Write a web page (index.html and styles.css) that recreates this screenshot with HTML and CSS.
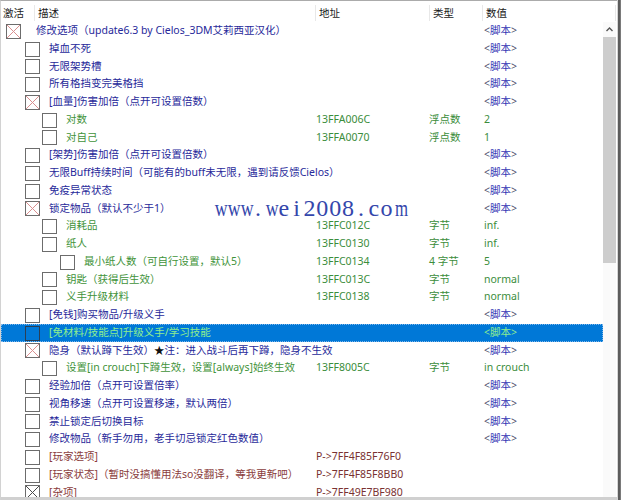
FILE: index.html
```html
<!DOCTYPE html>
<html lang="zh">
<head>
<meta charset="utf-8">
<title>Cheat Table</title>
<link rel="stylesheet" href="styles.css">
</head>
<body>
<div class="window">
  <div class="pane">
    <div class="header">
      <div class="hc hc-first">激活</div>
      <div class="hc">描述</div>
      <div class="hc">地址</div>
      <div class="hc">类型</div>
      <div class="hc hc-last">数值</div>
      <div class="hc-rest"></div>
    </div>
    <div class="middle">
      <div class="rows">
        <div class="row blue l0"><div class="desc"><span class="cb x"><svg viewBox="0 0 13 13"><path d="M0 0L13 13M13 0L0 13"/></svg></span><span class="txt">修改选项（update6.3 by Cielos_3DM艾莉西亚汉化）</span></div><div class="addr"></div><div class="type"></div><div class="val"><span class="br">&lt;</span><span class="sv">脚本</span><span class="br">&gt;</span></div></div>
        <div class="row blue l1"><div class="desc"><span class="cb"></span><span class="txt">掉血不死</span></div><div class="addr"></div><div class="type"></div><div class="val"><span class="br">&lt;</span><span class="sv">脚本</span><span class="br">&gt;</span></div></div>
        <div class="row blue l1"><div class="desc"><span class="cb"></span><span class="txt">无限架势槽</span></div><div class="addr"></div><div class="type"></div><div class="val"><span class="br">&lt;</span><span class="sv">脚本</span><span class="br">&gt;</span></div></div>
        <div class="row blue l1"><div class="desc"><span class="cb"></span><span class="txt">所有格挡变完美格挡</span></div><div class="addr"></div><div class="type"></div><div class="val"><span class="br">&lt;</span><span class="sv">脚本</span><span class="br">&gt;</span></div></div>
        <div class="row blue l1"><div class="desc"><span class="cb x"><svg viewBox="0 0 13 13"><path d="M0 0L13 13M13 0L0 13"/></svg></span><span class="txt">[血量]伤害加倍（点开可设置倍数）</span></div><div class="addr"></div><div class="type"></div><div class="val"><span class="br">&lt;</span><span class="sv">脚本</span><span class="br">&gt;</span></div></div>
        <div class="row green l2"><div class="desc"><span class="cb"></span><span class="txt">对数</span></div><div class="addr">13FFA006C</div><div class="type">浮点数</div><div class="val">2</div></div>
        <div class="row green l2"><div class="desc"><span class="cb"></span><span class="txt">对自己</span></div><div class="addr">13FFA0070</div><div class="type">浮点数</div><div class="val">1</div></div>
        <div class="row blue l1"><div class="desc"><span class="cb"></span><span class="txt">[架势]伤害加倍（点开可设置倍数）</span></div><div class="addr"></div><div class="type"></div><div class="val"><span class="br">&lt;</span><span class="sv">脚本</span><span class="br">&gt;</span></div></div>
        <div class="row blue l1"><div class="desc"><span class="cb"></span><span class="txt">无限Buff持续时间（可能有的buff未无限，遇到请反馈Cielos）</span></div><div class="addr"></div><div class="type"></div><div class="val"><span class="br">&lt;</span><span class="sv">脚本</span><span class="br">&gt;</span></div></div>
        <div class="row blue l1"><div class="desc"><span class="cb"></span><span class="txt">免疫异常状态</span></div><div class="addr"></div><div class="type"></div><div class="val"><span class="br">&lt;</span><span class="sv">脚本</span><span class="br">&gt;</span></div></div>
        <div class="row blue l1"><div class="desc"><span class="cb x"><svg viewBox="0 0 13 13"><path d="M0 0L13 13M13 0L0 13"/></svg></span><span class="txt">锁定物品（默认不少于1）</span></div><div class="addr"></div><div class="type"></div><div class="val"><span class="br">&lt;</span><span class="sv">脚本</span><span class="br">&gt;</span></div></div>
        <div class="row green l2"><div class="desc"><span class="cb"></span><span class="txt">消耗品</span></div><div class="addr">13FFC012C</div><div class="type">字节</div><div class="val">inf.</div></div>
        <div class="row green l2"><div class="desc"><span class="cb"></span><span class="txt">纸人</span></div><div class="addr">13FFC0130</div><div class="type">字节</div><div class="val">inf.</div></div>
        <div class="row green l3"><div class="desc"><span class="cb"></span><span class="txt">最小纸人数（可自行设置，默认5）</span></div><div class="addr">13FFC0134</div><div class="type">4 字节</div><div class="val">5</div></div>
        <div class="row green l2"><div class="desc"><span class="cb"></span><span class="txt">钥匙（获得后生效）</span></div><div class="addr">13FFC013C</div><div class="type">字节</div><div class="val">normal</div></div>
        <div class="row green l2"><div class="desc"><span class="cb"></span><span class="txt">义手升级材料</span></div><div class="addr">13FFC0138</div><div class="type">字节</div><div class="val">normal</div></div>
        <div class="row blue l1"><div class="desc"><span class="cb"></span><span class="txt">[免钱]购买物品/升级义手</span></div><div class="addr"></div><div class="type"></div><div class="val"><span class="br">&lt;</span><span class="sv">脚本</span><span class="br">&gt;</span></div></div>
        <div class="row sel l1"><div class="desc"><span class="cb"></span><span class="txt">[免材料/技能点]升级义手/学习技能</span></div><div class="addr"></div><div class="type"></div><div class="val">&lt;脚本&gt;</div></div>
        <div class="row blue l1"><div class="desc"><span class="cb x"><svg viewBox="0 0 13 13"><path d="M0 0L13 13M13 0L0 13"/></svg></span><span class="txt">隐身（默认蹲下生效）<span class="star">★</span>注：进入战斗后再下蹲，隐身不生效</span></div><div class="addr"></div><div class="type"></div><div class="val"><span class="br">&lt;</span><span class="sv">脚本</span><span class="br">&gt;</span></div></div>
        <div class="row green l2"><div class="desc"><span class="cb"></span><span class="txt">设置[in crouch]下蹲生效，设置[always]始终生效</span></div><div class="addr">13FF8005C</div><div class="type">字节</div><div class="val">in crouch</div></div>
        <div class="row blue l1"><div class="desc"><span class="cb"></span><span class="txt">经验加倍（点开可设置倍率）</span></div><div class="addr"></div><div class="type"></div><div class="val"><span class="br">&lt;</span><span class="sv">脚本</span><span class="br">&gt;</span></div></div>
        <div class="row blue l1"><div class="desc"><span class="cb"></span><span class="txt">视角移速（点开可设置移速，默认两倍）</span></div><div class="addr"></div><div class="type"></div><div class="val"><span class="br">&lt;</span><span class="sv">脚本</span><span class="br">&gt;</span></div></div>
        <div class="row blue l1"><div class="desc"><span class="cb"></span><span class="txt">禁止锁定后切换目标</span></div><div class="addr"></div><div class="type"></div><div class="val"><span class="br">&lt;</span><span class="sv">脚本</span><span class="br">&gt;</span></div></div>
        <div class="row blue l1"><div class="desc"><span class="cb"></span><span class="txt">修改物品（新手勿用，老手切忌锁定红色数值）</span></div><div class="addr"></div><div class="type"></div><div class="val"><span class="br">&lt;</span><span class="sv">脚本</span><span class="br">&gt;</span></div></div>
        <div class="row maroon l1"><div class="desc"><span class="cb"></span><span class="txt">[玩家选项]</span></div><div class="addr">P-&gt;7FF4F85F76F0</div><div class="type"></div><div class="val"></div></div>
        <div class="row maroon l1"><div class="desc"><span class="cb"></span><span class="txt">[玩家状态]（暂时没搞懂用法so没翻译，等我更新吧）</span></div><div class="addr">P-&gt;7FF4F85F8BB0</div><div class="type"></div><div class="val"></div></div>
        <div class="row maroon l1"><div class="desc"><span class="cb x dark"><svg viewBox="0 0 13 13"><path d="M0 0L13 13M13 0L0 13"/></svg></span><span class="txt">[杂项]</span></div><div class="addr">P-&gt;7FF49E7BF980</div><div class="type"></div><div class="val"></div></div>
      </div>
      <div class="vscroll">
        <div class="sb-up"><svg viewBox="0 0 13 15"><path d="M3.5 9L6.5 6L9.5 9"/></svg></div>
        <div class="sb-thumb"></div>
        <div class="sb-track"></div>
      </div>
    </div>
    <div class="hscroll"></div>
  </div>
  <div class="edge"></div>
  <div class="watermark"><span class="wc wn">w</span><span class="wc wn">w</span><span class="wc wn">w</span><span class="wc">.</span><span class="wc wn">w</span><span class="wc">e</span><span class="wc">i</span><span class="wc">2</span><span class="wc">0</span><span class="wc">0</span><span class="wc">8</span><span class="wc">.</span><span class="wc">c</span><span class="wc">o</span><span class="wc wm">m</span></div>
</div>
</body>
</html>
```

FILE: styles.css
```css
html, body {
  margin: 0;
  padding: 0;
  background: #ffffff;
}

body {
  width: 621px;
  height: 500px;
  overflow: hidden;
  font-family: "Noto Sans", "Noto Sans CJK SC", sans-serif;
  font-size: 10.5px;
}

.window {
  position: relative;
  width: 621px;
  height: 500px;
  display: flex;
  background: #ffffff;
  overflow: hidden;
}

.pane {
  width: 617px;
  height: 500px;
  box-sizing: border-box;
  border-top: 1px solid #ababab;
  border-left: 1px solid #d2d2d2;
  display: flex;
  flex-direction: column;
}

.edge {
  width: 4px;
  height: 500px;
  background: linear-gradient(to right, #d6d6d6 0 1px, #5c5c5c 1px 3px, #7a7a7a 3px 4px);
}

/* header */
.header {
  height: 21px;
  box-sizing: border-box;
  padding-top: 4px;
  display: grid;
  grid-template-columns: 33px 281px 114px 53px 134px 1fr;
  color: #1a1a1a;
  flex: none;
}

.hc {
  height: 16px;
  line-height: 16px;
  border-left: 1px solid #e8e8e8;
  padding-left: 3px;
  white-space: nowrap;
}

.hc-first {
  border-left: none;
  padding-left: 2px;
}

.hc-last {
  border-right: 1px solid #e8e8e8;
}

.hc-rest {
  height: 16px;
}

/* body */
.middle {
  flex: 1;
  min-height: 0;
  display: flex;
}

.rows {
  flex: 1;
  min-width: 0;
  overflow: hidden;
}

.row {
  height: 17.76px;
  line-height: 17.76px;
  display: grid;
  grid-template-columns: 314px 114px 53px 1fr;
  white-space: nowrap;
}

.desc {
  display: flex;
  align-items: center;
  min-width: 0;
  overflow: visible;
  position: relative;
  z-index: 1;
}

.cb {
  flex: none;
  width: 15px;
  height: 15px;
  box-sizing: border-box;
  border: 1px solid #6c6c6c;
  background: #ffffff;
  margin-top: 1px;
  margin-right: 9px;
  display: flex;
}

.cb svg {
  width: 13px;
  height: 13px;
}

.cb svg path {
  stroke: #d98f8f;
  stroke-width: 1;
  fill: none;
}

.cb.dark svg path {
  stroke: #4a4a4a;
}

.l0 .cb { margin-left: 5px; margin-right: 15px; }
.l1 .cb { margin-left: 24px; }
.l2 .cb { margin-left: 41px; }
.l3 .cb { margin-left: 59px; }

.addr { padding-left: 1px; }
.type { padding-left: 0; }
.val { padding-left: 2px; }

.blue .txt { color: #27299a; }
.sv { color: #3537b4; }
.br { color: #4a4a68; }

.green { color: #3b8d3b; }
.green .txt { color: #3f933a; }

.maroon { color: #7a3232; }
.maroon .txt { color: #8a3c3c; }

.star { color: #111111; }

.sel {
  background: #0078d7;
  color: #8fee8f;
  outline: 1px dotted #7fb6ea;
  outline-offset: -1px;
}

.sel .cb {
  background: transparent;
  border-color: #2b3f55;
}

/* scrollbars */
.vscroll {
  width: 13px;
  margin-right: 1px;
  display: flex;
  flex-direction: column;
  background: #fafafa;
}

.sb-up {
  height: 15px;
  flex: none;
  display: flex;
}

.sb-up svg {
  width: 13px;
  height: 15px;
}

.sb-up path {
  stroke: #555555;
  stroke-width: 1.4;
  fill: none;
}

.sb-thumb {
  height: 226px;
  flex: none;
  background: #cdcdcd;
}

.sb-track {
  flex: 1;
}

.hscroll {
  height: 3px;
  flex: none;
  background: #d0d0d0;
}

/* watermark overlay */
.watermark {
  position: absolute;
  left: 213px;
  top: 198px;
  display: flex;
  font-family: "Liberation Serif", serif;
  font-size: 24px;
  line-height: 20px;
  height: 20px;
  color: #3446ab;
  white-space: nowrap;
  z-index: 2;
}

.wc {
  display: inline-block;
  width: 12.87px;
  text-align: center;
}

.wn {
  transform: scaleX(0.74);
}

.wm {
  transform: scaleX(0.7);
}
```
